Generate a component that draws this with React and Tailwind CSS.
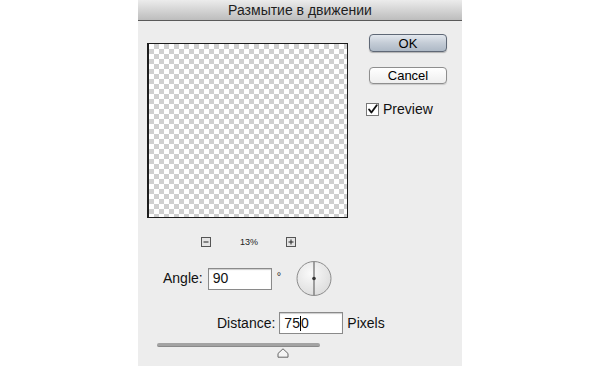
import React from 'react'

const font = { fontFamily: '"Liberation Sans", Arial, sans-serif' }

function ZoomBox({ plus }) {
  return (
    <svg width="10" height="10" viewBox="0 0 10 10">
      <rect x="0.5" y="0.5" width="9" height="9" fill="#e4e4e4" stroke="#555" />
      <line x1="2.5" y1="5" x2="7.5" y2="5" stroke="#222" strokeWidth="1" />
      {plus && <line x1="5" y1="2.5" x2="5" y2="7.5" stroke="#222" strokeWidth="1" />}
    </svg>
  )
}

function AngleDial() {
  return (
    <svg width="36" height="37" viewBox="0 0 36 37">
      <defs>
        <radialGradient id="dial" cx="0.4" cy="0.35" r="0.7">
          <stop offset="0" stopColor="#fafafa" />
          <stop offset="1" stopColor="#dcdcdc" />
        </radialGradient>
      </defs>
      <circle cx="18" cy="18.5" r="17" fill="url(#dial)" stroke="#8c8c8c" strokeWidth="1" />
      <line x1="18" y1="2" x2="18" y2="35" stroke="#6a6a6a" strokeWidth="1.2" />
      <circle cx="18" cy="18.5" r="1.8" fill="#333" />
    </svg>
  )
}

function SliderThumb() {
  return (
    <svg width="12" height="10" viewBox="0 0 12 10">
      <path d="M6 0.8 L11 5.5 L11 9.2 L1 9.2 L1 5.5 Z" fill="#f4f4f4" stroke="#666" strokeWidth="1" />
    </svg>
  )
}

export default function App() {
  return (
    <div className="w-[600px] h-[366px] bg-white overflow-hidden" style={font}>
      <div className="mx-auto w-[324px] h-[366px] bg-[#ededed] flex flex-col">
        <div className="h-[21px] shrink-0 flex items-center justify-center bg-gradient-to-b from-[#ececec] to-[#bdbdbd] border-b border-[#5a5a5a] text-[14px] text-[#1e1e1e]">
          Размытие в движении
        </div>

        <div className="flex">
          <div className="ml-[9px] mt-[22px] w-[201px] h-[175px] border border-[#1c1c1c] border-l-2 bg-[conic-gradient(#cfcfcf_25%,#ffffff_0_50%,#cfcfcf_0_75%,#ffffff_0)] bg-[length:10px_10px]" />

          <div className="ml-[21px] mt-[13px] w-[78px] flex flex-col">
            <button className="h-[18px] rounded-[4px] border border-[#5f6876] bg-gradient-to-b from-[#e3e8ee] via-[#c4ccd6] to-[#aeb9c6] text-[13px] text-black leading-none shadow-[0_1px_1px_rgba(0,0,0,0.25)]">
              OK
            </button>
            <button className="mt-[15px] h-[17px] rounded-[4px] border border-[#8e8e8e] bg-gradient-to-b from-white to-[#eeeeee] text-[13px] text-black leading-none shadow-[0_1px_1px_rgba(0,0,0,0.15)]">
              Cancel
            </button>
            <label className="mt-[15px] -ml-[3px] flex items-center gap-[4px] text-[14px] text-[#111]">
              <span className="w-[13px] h-[13px] border border-[#777] bg-white flex items-center justify-center">
                <svg width="13" height="13" viewBox="0 0 13 13">
                  <path d="M2.5 6.5 L5.2 10 L11.5 1.5" fill="none" stroke="#111" strokeWidth="2.2" strokeLinecap="round" strokeLinejoin="round" />
                </svg>
              </span>
              Preview
            </label>
          </div>
        </div>

        <div className="mt-[19px] flex items-center text-[#222]">
          <div className="ml-[63px]">
            <ZoomBox />
          </div>
          <span className="ml-[29px] text-[9px] leading-none">13%</span>
          <div className="ml-[28px]">
            <ZoomBox plus />
          </div>
        </div>

        <div className="mt-[13px] flex items-center text-[14px] text-[#111]">
          <span className="ml-[25px]">Angle:</span>
          <div className="ml-[5px] w-[64px] h-[22px] border border-[#8a8a8a] bg-white shadow-[inset_0_1px_1px_rgba(0,0,0,0.2)] flex items-center pl-[4px]">
            90
          </div>
          <span className="ml-[5px] self-start mt-[11px] text-[11px] leading-none text-[#222]">°</span>
          <div className="ml-[15px]">
            <AngleDial />
          </div>
        </div>

        <div className="mt-[15px] flex items-center text-[14px] text-[#111]">
          <span className="ml-[79px]">Distance:</span>
          <div className="ml-[4px] w-[64px] h-[22px] border border-[#8a8a8a] bg-white shadow-[inset_0_1px_1px_rgba(0,0,0,0.2)] flex items-center pl-[4px]">
            75<span className="w-px h-[15px] bg-black" />0
          </div>
          <span className="ml-[4px]">Pixels</span>
        </div>

        <div className="mt-[9px] ml-[19px] w-[163px] flex flex-col">
          <div className="h-[4px] rounded-full bg-[#a3a3a3] border-b border-[#8a8a8a]" />
          <div className="ml-[120px] mt-[1px]">
            <SliderThumb />
          </div>
        </div>
      </div>
    </div>
  )
}
